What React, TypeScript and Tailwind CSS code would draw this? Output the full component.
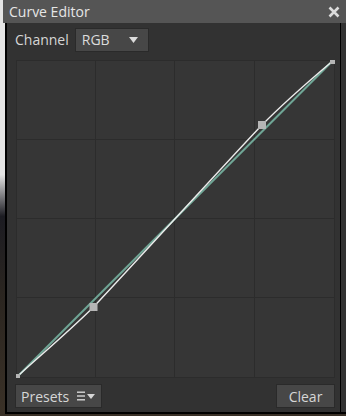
import React from "react";

const font = { fontFamily: '"Open Sans", "Noto Sans", sans-serif' };

function Graph() {
  const W = 319;
  const H = 318;
  const xs = [0.5, 79.5, 158.5, 238.5, 318.5];
  const ys = [0.5, 79.5, 158.5, 237.5, 317.5];
  const white =
    "M1.5,316.5 C8.6,309.1 52.5,272.1 77.5,247 C101.5,221.9 222.1,89.6 246,65 C269.9,40.4 309,7.4 316.5,1";
  return (
    <svg width={W} height={H} viewBox={`0 0 ${W} ${H}`} className="block">
      <rect x="0" y="0" width={W} height={H} fill="#363636" />
      {xs.map((x) => (
        <line key={"x" + x} x1={x} y1={0} x2={x} y2={H} stroke="#2c2c2c" strokeWidth="1" />
      ))}
      {ys.map((y) => (
        <line key={"y" + y} x1={0} y1={y} x2={W} y2={y} stroke="#2c2c2c" strokeWidth="1" />
      ))}
      <line x1="1.5" y1="316.5" x2="316.5" y2="1" stroke="#6fa595" strokeWidth="2" />
      <path d={white} fill="none" stroke="#ececec" strokeWidth="1.4" />
      <rect x="-1" y="314" width="5" height="5" fill="#b5b5b5" />
      <rect x="314" y="-1" width="5" height="5" fill="#b5b5b5" />
      <rect x="73.5" y="243" width="8" height="8" fill="#b5b5b5" />
      <rect x="242" y="61" width="8" height="8" fill="#b5b5b5" />
    </svg>
  );
}

export default function App() {
  return (
    <div
      className="w-[346px] h-[416px] flex bg-[linear-gradient(to_bottom,#e4e4e4_0%,#e4e4e4_42%,#1c1c22_52%,#2a2520_70%,#3a3127_100%)] overflow-hidden"
      style={font}
    >
      <div className="w-[3px] shrink-0" />
      <div className="flex-1 flex flex-col">
        <div className="h-[23px] shrink-0 bg-[#555555] flex items-center justify-between pl-[6px] pr-[6px]">
          <span className="text-[14px] text-[#e6e6e6] leading-none">Curve Editor</span>
          <svg width="12" height="12" viewBox="0 0 12 12">
            <path d="M1.5 1.5 L10.5 10.5 M10.5 1.5 L1.5 10.5" stroke="#dcdcdc" strokeWidth="2.6" strokeLinecap="butt" />
          </svg>
        </div>
        <div className="flex-1 flex ml-[2px] mb-[2px] bg-[#323232] border-b-2 border-black">
          <div className="flex-1 flex flex-col border-l-2 border-r border-black">
            <div className="h-[31px] flex items-center pl-[8px] pt-[2px] gap-[6px]">
              <span className="text-[14px] text-[#d6d6d6]">Channel</span>
              <div className="w-[74px] h-[24px] bg-[#474747] border border-[#2a2a2a] flex items-center justify-between pl-[6px] pr-[10px]">
                <span className="text-[14px] text-[#dcdcdc]">RGB</span>
                <svg width="9" height="6" viewBox="0 0 9 6">
                  <path d="M0 0 L9 0 L4.5 6 Z" fill="#dcdcdc" />
                </svg>
              </div>
            </div>
            <div className="pl-[9px] pt-[6px]">
              <Graph />
            </div>
            <div className="flex justify-between pl-[8px] pr-[5px] pt-[6px]">
              <div className="w-[87px] h-[24px] bg-[#474747] border border-[#2a2a2a] flex items-center pl-[5px] gap-[8px]">
                <span className="text-[14px] text-[#d6d6d6]">Presets</span>
                <svg width="20" height="10" viewBox="0 0 20 10">
                  <rect x="0" y="0.5" width="8" height="1.4" fill="#d6d6d6" />
                  <rect x="0" y="4.3" width="8" height="1.4" fill="#d6d6d6" />
                  <rect x="0" y="8.1" width="8" height="1.4" fill="#d6d6d6" />
                  <path d="M10 3 L18 3 L14 8 Z" fill="#d6d6d6" />
                </svg>
              </div>
              <div className="w-[59px] h-[24px] bg-[#474747] border border-[#2a2a2a] flex items-center justify-center">
                <span className="text-[14px] text-[#d6d6d6]">Clear</span>
              </div>
            </div>
          </div>
          <div className="w-[5px] shrink-0 bg-[#333333]" />
        </div>
      </div>
    </div>
  );
}
